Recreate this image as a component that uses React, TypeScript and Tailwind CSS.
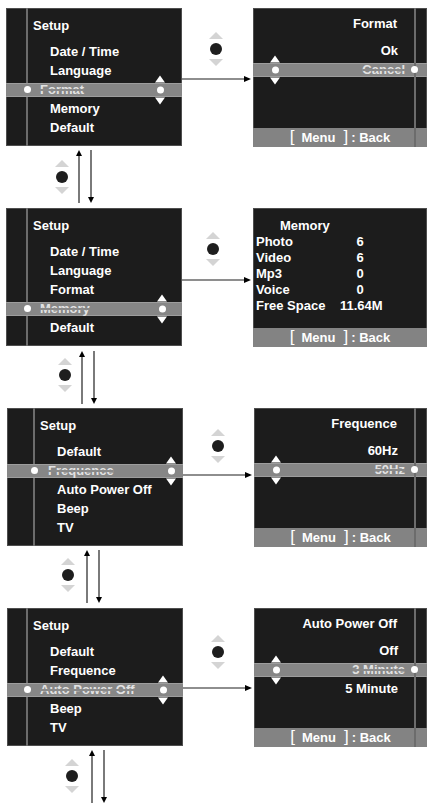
import React from 'react';

const FONT = "font-['Liberation_Sans',Arial,sans-serif]";

interface SetupCfg {
  items: string[];
  active: number;
  line: string;
  title: string;
  item: string;
  dot: string;
  hi: string;
  marks: string;
}

interface RowCfg {
  left: SetupCfg;
  leftMl: string;
  joy: string;
  arrowMt: string;
  right: React.ReactNode;
}

function ScrollMarks() {
  return (
    <div className="flex flex-col items-center gap-[4px]">
      <div className="w-0 h-0 border-x-[5px] border-x-transparent border-b-[7px] border-b-white" />
      <div className="w-[7px] h-[7px] rounded-full bg-white" />
      <div className="w-0 h-0 border-x-[5px] border-x-transparent border-t-[7px] border-t-white" />
    </div>
  );
}

function Joystick() {
  return (
    <div className="flex flex-col items-center gap-[4px] w-[14px]">
      <div className="w-0 h-0 border-x-[7px] border-x-transparent border-b-[7px] border-b-[#d4d4d4]" />
      <div className="w-[12px] h-[12px] rounded-full bg-[#1e1e1e]" />
      <div className="w-0 h-0 border-x-[7px] border-x-transparent border-t-[7px] border-t-[#d4d4d4]" />
    </div>
  );
}

function ArrowRight() {
  return (
    <div className="flex items-center h-[6px] mr-[2px]">
      <div className="flex-1 h-[2px] bg-[#8e8e8e]" />
      <div className="w-0 h-0 border-y-[3px] border-y-transparent border-l-[7px] border-l-black" />
    </div>
  );
}

function VArrows() {
  return (
    <div className="flex gap-[6px] h-[53px]">
      <div className="flex flex-col items-center w-[6px]">
        <div className="w-0 h-0 border-x-[3px] border-x-transparent border-b-[6px] border-b-black" />
        <div className="flex-1 w-[2px] bg-[#7a7a7a]" />
      </div>
      <div className="flex flex-col items-center w-[6px]">
        <div className="flex-1 w-[2px] bg-[#7a7a7a]" />
        <div className="w-0 h-0 border-x-[3px] border-x-transparent border-t-[6px] border-t-black" />
      </div>
    </div>
  );
}

function HiText({ children }: { children: React.ReactNode }) {
  return (
    <span className="text-[#e2e2e2] line-through decoration-[#8a8a8a] decoration-[2px] whitespace-nowrap">
      {children}
    </span>
  );
}

function SetupScreen({ cfg }: { cfg: SetupCfg }) {
  return (
    <div className="relative w-[176px] h-[138px] bg-[#1c1c1c] shadow-[inset_0_0_0_1px_#4e4e4e] pt-[10px] text-white font-bold text-[13px]">
      <div className={`absolute inset-y-0 w-[2px] bg-[#6c6c6c] ${cfg.line}`} />
      <div className={`relative h-[16px] leading-[16px] ${cfg.title}`}>Setup</div>
      <div className="mt-[8px]">
        {cfg.items.map((it, i) =>
          i === cfg.active ? (
            <div key={i} className="relative h-[19px] flex items-center">
              <div className="w-full h-[14px] bg-[#868686] border-y border-[#9d9d9d] flex items-center">
                <div className={`w-[7px] h-[7px] rounded-full bg-white shrink-0 ${cfg.dot}`} />
                <div className={cfg.hi}>
                  <HiText>{it}</HiText>
                </div>
              </div>
              <div className={`absolute top-1/2 -translate-y-1/2 ${cfg.marks}`}>
                <ScrollMarks />
              </div>
            </div>
          ) : (
            <div key={i} className={`relative h-[19px] leading-[19px] whitespace-nowrap ${cfg.item}`}>
              {it}
            </div>
          )
        )}
      </div>
    </div>
  );
}

function Footer() {
  return (
    <div className="mt-auto h-[19px] bg-[#838383] flex items-center justify-center text-white font-bold text-[13px]">
      <span className="font-normal text-[17px] leading-none mr-[7px] -mt-[2px]">[</span>
      <span>Menu</span>
      <span className="font-normal text-[17px] leading-none ml-[8px] mr-[3px] -mt-[2px]">]</span>
      <span>: Back</span>
    </div>
  );
}

function OptionScreen({ title, items, active }: { title: string; items: string[]; active: number }) {
  return (
    <div className="relative flex-1 h-[139px] bg-[#1c1c1c] shadow-[inset_0_0_0_1px_#4e4e4e] flex flex-col pt-[8px] text-white font-bold text-[13px]">
      <div className="h-[16px] leading-[16px] text-right pr-[30px] whitespace-nowrap">{title}</div>
      <div className="mt-[9px]">
        {items.map((it, i) =>
          i === active ? (
            <div key={i} className="relative h-[19px] flex items-center">
              <div className="w-full h-[14px] bg-[#868686] border-y border-[#9d9d9d] flex items-center justify-end">
                <HiText>{it}</HiText>
                <div className="w-[7px] h-[7px] rounded-full bg-white ml-[6px] mr-[9px] relative z-10" />
              </div>
              <div className="absolute top-1/2 -translate-y-1/2 left-[17px]">
                <ScrollMarks />
              </div>
            </div>
          ) : (
            <div key={i} className="h-[19px] leading-[19px] text-right pr-[29px] whitespace-nowrap">
              {it}
            </div>
          )
        )}
      </div>
      <Footer />
      <div className="absolute inset-y-0 right-[11px] w-[2px] bg-[#6c6c6c]" />
    </div>
  );
}

const memoryRows: [string, string][] = [
  ['Photo', '6'],
  ['Video', '6'],
  ['Mp3', '0'],
  ['Voice', '0'],
  ['Free Space', '11.64M'],
];

function MemoryScreen() {
  return (
    <div className="relative flex-1 h-[139px] bg-[#1c1c1c] shadow-[inset_0_0_0_1px_#4e4e4e] flex flex-col pt-[10px] text-white font-bold text-[13px]">
      <div className="h-[16px] leading-[16px] pl-[27px]">Memory</div>
      {memoryRows.map(([k, v]) => (
        <div key={k} className="h-[16px] leading-[16px] flex">
          <div className="w-[87px] pl-[3px] whitespace-nowrap">{k}</div>
          <div className="w-[40px] text-center whitespace-nowrap">{v}</div>
        </div>
      ))}
      <Footer />
    </div>
  );
}

const setupA = ['Date / Time', 'Language', 'Format', 'Memory', 'Default'];
const setupB = ['Default', 'Frequence', 'Auto Power Off', 'Beep', 'TV'];

const rows: RowCfg[] = [
  {
    left: {
      items: setupA,
      active: 2,
      line: 'left-[20px]',
      title: 'pl-[27px]',
      item: 'pl-[44px]',
      dot: 'ml-[18px]',
      hi: 'ml-[9px]',
      marks: 'left-[149px]',
    },
    leftMl: 'ml-[6px]',
    joy: 'pt-[24px] pl-[27px]',
    arrowMt: 'mt-[10px]',
    right: <OptionScreen title="Format" items={['Ok', 'Cancel', '']} active={1} />,
  },
  {
    left: {
      items: setupA,
      active: 3,
      line: 'left-[20px]',
      title: 'pl-[27px]',
      item: 'pl-[44px]',
      dot: 'ml-[18px]',
      hi: 'ml-[9px]',
      marks: 'left-[151px]',
    },
    leftMl: 'ml-[6px]',
    joy: 'pt-[24px] pl-[24px]',
    arrowMt: 'mt-[11px]',
    right: <MemoryScreen />,
  },
  {
    left: {
      items: setupB,
      active: 1,
      line: 'left-[26px]',
      title: 'pl-[33px]',
      item: 'pl-[50px]',
      dot: 'ml-[24px]',
      hi: 'ml-[10px]',
      marks: 'left-[159px]',
    },
    leftMl: 'ml-[7px]',
    joy: 'pt-[21px] pl-[28px]',
    arrowMt: 'mt-[9px]',
    right: <OptionScreen title="Frequence" items={['60Hz', '50Hz', '']} active={1} />,
  },
  {
    left: {
      items: setupB,
      active: 2,
      line: 'left-[19px]',
      title: 'pl-[26px]',
      item: 'pl-[43px]',
      dot: 'ml-[17px]',
      hi: 'ml-[9px]',
      marks: 'left-[151px]',
    },
    leftMl: 'ml-[7px]',
    joy: 'pt-[27px] pl-[28px]',
    arrowMt: 'mt-[16px]',
    right: <OptionScreen title="Auto Power Off" items={['Off', '3 Minute', '5 Minute']} active={1} />,
  },
];

const connectors = [
  { box: 'h-[62px]', joy: 'mt-[14px] ml-[55px]', arr: 'mt-[4px] ml-[7px]' },
  { box: 'h-[62px]', joy: 'mt-[12px] ml-[58px]', arr: 'mt-[5px] ml-[7px]' },
  { box: 'h-[62px]', joy: 'mt-[12px] ml-[61px]', arr: 'mt-[4px] ml-[9px]' },
  { box: 'flex-1', joy: 'mt-[13px] ml-[65px]', arr: 'mt-[4px] ml-[10px]' },
];

export default function App() {
  return (
    <div className={`w-[427px] h-[803px] bg-white overflow-hidden flex flex-col pt-[8px] ${FONT}`}>
      {rows.map((r, i) => (
        <React.Fragment key={i}>
          <div className="flex items-start h-[138px] shrink-0">
            <div className={r.leftMl}>
              <SetupScreen cfg={r.left} />
            </div>
            <div className="w-[71px] flex flex-col">
              <div className={r.joy}>
                <Joystick />
              </div>
              <div className={r.arrowMt}>
                <ArrowRight />
              </div>
            </div>
            {r.right}
          </div>
          <div className={`flex items-start shrink-0 ${connectors[i].box}`}>
            <div className={connectors[i].joy}>
              <Joystick />
            </div>
            <div className={connectors[i].arr}>
              <VArrows />
            </div>
          </div>
        </React.Fragment>
      ))}
    </div>
  );
}
